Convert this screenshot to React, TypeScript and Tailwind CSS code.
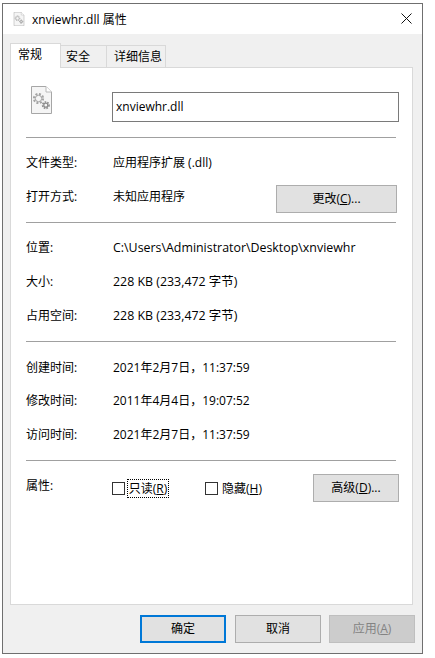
import React from "react";

function GearDoc({ small }: { small?: boolean }) {
  return (
    <svg width={small ? 12 : 21} height={small ? 14 : 28} viewBox="0 0 21 28" className="block">
      <path d="M0.5 0.5H15L20.5 6V27.5H0.5Z" fill="#f5f5f5" stroke="#a6a6a6" />
      <path d="M15 0.5V6H20.5" fill="#fff" stroke="#b8b8b8" />
      <g fill="none">
        <circle cx="7.5" cy="12.5" r="4.6" stroke="#a3a3a3" strokeWidth="2" strokeDasharray="2 1.6" />
        <circle cx="7.5" cy="12.5" r="3.2" stroke="#a3a3a3" strokeWidth="1" />
        <circle cx="14.8" cy="19.2" r="3.2" stroke="#8c8c8c" strokeWidth="1.6" strokeDasharray="1.6 1.1" />
        <circle cx="14.8" cy="19.2" r="2" stroke="#8c8c8c" strokeWidth="1.2" />
      </g>
    </svg>
  );
}

function Row({ label, value, className, valueClass }: { label: string; value: string; className?: string; valueClass?: string }) {
  return (
    <div className={"flex h-[18px] items-center " + (className ?? "")}>
      <div className="w-[87px] shrink-0">{label}</div>
      <div className={"whitespace-nowrap " + (valueClass ?? "")}>{value}</div>
    </div>
  );
}

function Hr({ className }: { className?: string }) {
  return <div className={"h-px w-[370px] bg-[#a0a0a0] " + (className ?? "")} />;
}

function Btn({ children, className }: { children: React.ReactNode; className?: string }) {
  return (
    <div className={"flex items-center justify-center border border-[#adadad] bg-[#e1e1e1] " + (className ?? "")}>
      {children}
    </div>
  );
}

export default function App() {
  return (
    <div className="h-[658px] w-[435px] bg-white pl-[2px] pt-[3px] text-[12px] leading-[18px] text-black [font-family:'Open_Sans','Noto_Sans_CJK_SC',sans-serif]">
      <div className="flex h-[651px] w-[421px] flex-col border border-[#6f6f6f] bg-[#f0f0f0]">
        {/* Title bar */}
        <div className="flex h-[30px] shrink-0 items-center bg-white pl-[10px] pr-[10px]">
          <GearDoc small />
          <span className="ml-[7px] mt-[1px]">xnviewhr.dll 属性</span>
          <svg width="11" height="11" viewBox="0 0 11 11" className="mb-[2px] ml-auto">
            <path d="M0.5 0.5L10.5 10.5M10.5 0.5L0.5 10.5" stroke="#111" strokeWidth="1" />
          </svg>
        </div>

        {/* Tabs */}
        <div className="flex h-[33px] shrink-0 items-end pl-[7px]">
          <div className="z-10 -mb-px flex h-[25px] w-[51px] items-center border border-b-0 border-[#d9d9d9] bg-white pb-[3px] pl-[7px]">常规</div>
          <div className="flex h-[22px] w-[46px] items-center border border-b-0 border-l-0 border-[#d9d9d9] pl-[5px]">安全</div>
          <div className="flex h-[22px] w-[59px] items-center border border-b-0 border-l-0 border-[#d9d9d9] pl-[7px]">详细信息</div>
        </div>

        {/* Panel */}
        <div className="ml-[7px] flex h-[538px] w-[403px] shrink-0 flex-col border border-[#d9d9d9] bg-white pl-[15px]">
          <div className="mt-[18px] flex items-start">
            <div className="ml-[5px] w-[81px] shrink-0">
              <GearDoc />
            </div>
            <div className="mt-[6px] flex h-[30px] w-[287px] items-center border border-[#7a7a7a] pl-[3px]">xnviewhr.dll</div>
          </div>

          <Hr className="mt-[15px]" />
          <Row label="文件类型:" value="应用程序扩展 (.dll)" className="mt-[16px]" />
          <div className="mt-[13px] flex h-[28px] w-[371px] items-center">
            <div className="mb-[4px] w-[87px] shrink-0">打开方式:</div>
            <div className="mb-[4px]">未知应用程序</div>
            <Btn className="ml-auto h-[28px] w-[121px]">更改(<span className="underline">C</span>)...</Btn>
          </div>
          <Hr className="mt-[9px]" />
          <Row label="位置:" value="C:\Users\Administrator\Desktop\xnviewhr" valueClass="text-[12.4px]" className="mt-[16px]" />
          <Row label="大小:" value="228 KB (233,472 字节)" valueClass="text-[12.4px]" className="mt-[16px]" />
          <Row label="占用空间:" value="228 KB (233,472 字节)" valueClass="text-[12.4px]" className="mt-[16px]" />
          <Hr className="mt-[16px]" />
          <Row label="创建时间:" value="2021年2月7日，11:37:59" className="mt-[17px]" />
          <Row label="修改时间:" value="2011年4月4日，19:07:52" className="mt-[15px]" />
          <Row label="访问时间:" value="2021年2月7日，11:37:59" className="mt-[16px]" />
          <Hr className="mt-[16px]" />

          <div className="mt-[13px] flex h-[28px] w-[373px] items-start">
            <div className="mt-[3px] w-[86px] shrink-0">属性:</div>
            <div className="mt-[5px] flex items-center">
              <div className="h-[13px] w-[13px] border border-[#333]" />
              <div className="ml-[2px] flex h-[19px] w-[42px] items-center justify-center border border-dotted border-black">
                <span>只读(<span className="underline">R</span>)</span>
              </div>
            </div>
            <div className="ml-[36px] mt-[5px] flex h-[19px] items-center">
              <div className="h-[13px] w-[13px] border border-[#333]" />
              <div className="ml-[4px]">隐藏(<span className="underline">H</span>)</div>
            </div>
            <Btn className="ml-auto h-[28px] w-[86px]">高级(<span className="underline">D</span>)...</Btn>
          </div>
        </div>

        {/* Footer */}
        <div className="mt-[10px] flex h-[28px] shrink-0 pl-[137px]">
          <div className="flex h-[28px] w-[86px] items-center justify-center border-2 border-[#0078d7] bg-[#e1e1e1]">确定</div>
          <Btn className="ml-[9px] h-[28px] w-[86px]">取消</Btn>
          <div className="ml-[8px] flex h-[28px] w-[86px] items-center justify-center border border-[#bfbfbf] bg-[#cccccc] text-[#838383]">
            <span>应用(<span className="underline">A</span>)</span>
          </div>
        </div>
      </div>
    </div>
  );
}
